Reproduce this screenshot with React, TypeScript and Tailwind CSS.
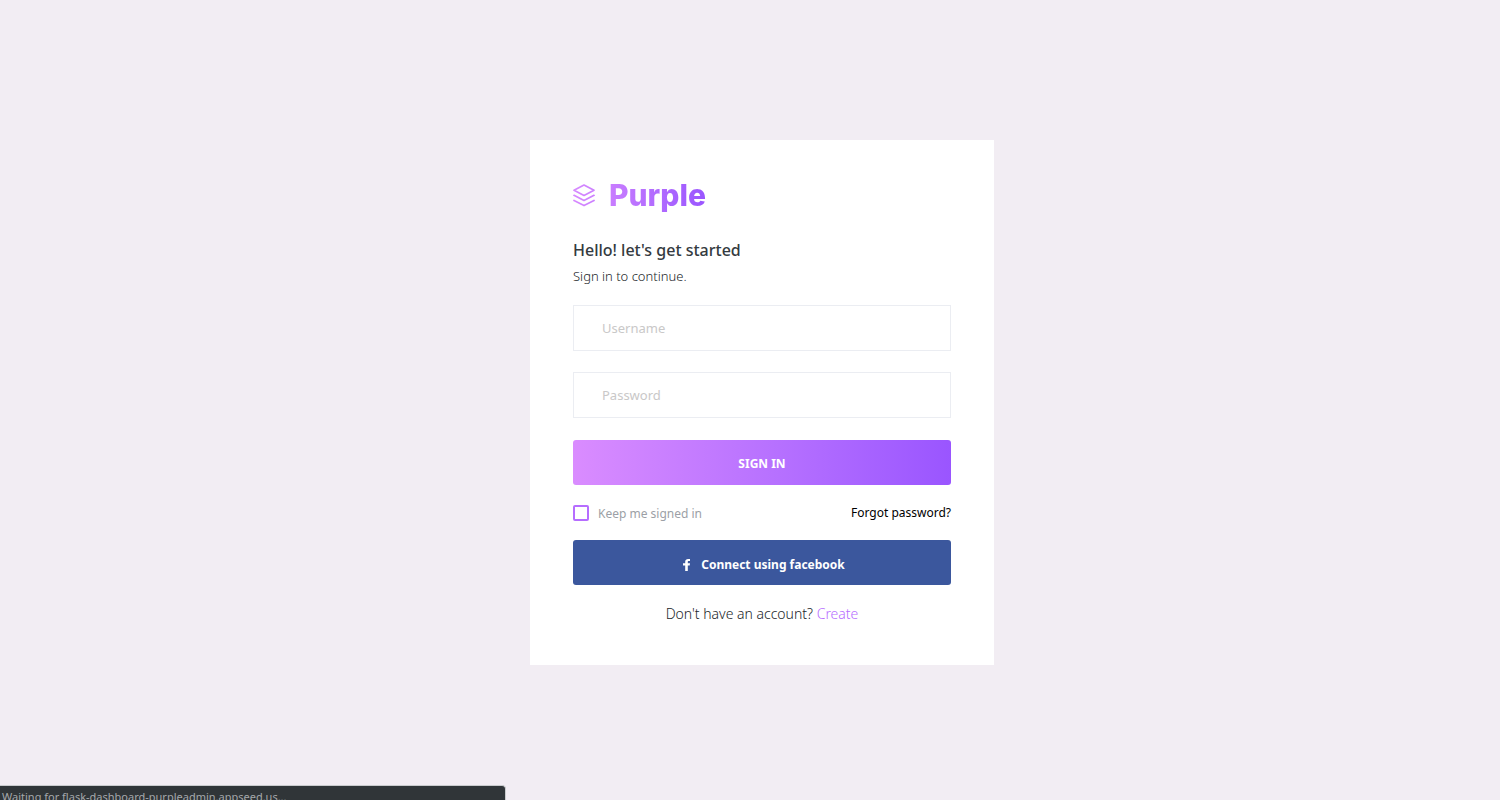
import React from "react";

function LayersIcon() {
  return (
    <svg className="h-6 w-[22px] shrink-0" viewBox="0 0 22 24" fill="none" aria-hidden="true">
      <defs>
        <linearGradient id="brand" gradientUnits="userSpaceOnUse" x1="-4" y1="0" x2="60" y2="0">
          <stop offset="0" stopColor="#da8cff" />
          <stop offset="1" stopColor="#b66dff" />
        </linearGradient>
      </defs>
      <g stroke="url(#brand)" strokeWidth="1.7" strokeLinejoin="round" strokeLinecap="round">
        <path d="M11 2 21 7.200 11 12.400 1 7.200Z" />
        <path d="M1 12.300 11 17.500 21 12.300" />
        <path d="M1 17.400 11 22.600 21 17.400" />
      </g>
    </svg>
  );
}

function FacebookIcon() {
  return (
    <svg className="h-3 w-[7px] shrink-0" viewBox="0 0 7 12" fill="currentColor" aria-hidden="true">
      <path d="M7 .1V2H5.800c-.8 0-1 .4-1 1v1.300H7l-.3 2.100H4.800V12H2.200V6.400H0V4.300h2.200V2.600C2.200.9 3.400 0 5.100 0 5.900 0 6.600.1 7 .1Z" />
    </svg>
  );
}

const field =
  "h-[46px] w-full rounded-none border border-[#ebedf2] bg-white px-7 text-[13px] text-[#343a40] placeholder:text-[#c9c8c8] placeholder:opacity-100 outline-none focus:border-[#b66dff]";

export default function App() {
  return (
    <div className="relative flex min-h-screen items-center justify-center overflow-hidden bg-[#f2edf3] pt-[5px] pl-6 font-['Noto_Sans',sans-serif] text-[#343a40]">
      <main className="w-full max-w-[464px] bg-white px-[43px] pt-[34px] pb-[41px]">
        <div className="flex h-[42px] items-center gap-[14px]">
          <LayersIcon />
          <span className="bg-linear-to-r from-[#c97dff] to-[#9a55ff] bg-clip-text font-['Inter',sans-serif] text-3xl leading-10 font-extrabold text-transparent">
            Purple
          </span>
        </div>
        <h1 className="mt-[22px] text-base leading-6 font-medium">Hello! let's get started</h1>
        <p className="mt-1 text-[13px] leading-5 font-light text-[#212529]">Sign in to continue.</p>
        <form className="mt-[19px]" onSubmit={(e) => e.preventDefault()}>
          <input className={field} type="text" placeholder="Username" aria-label="Username" />
          <input className={`${field} mt-[21px]`} type="password" placeholder="Password" aria-label="Password" />
          <button
            type="submit"
            className="mt-[22px] block h-[45px] w-full rounded-[3px] bg-linear-to-r from-[#da8cff] to-[#9a55ff] pt-0.5 text-xs font-bold text-white"
          >
            SIGN IN
          </button>
          <div className="mt-[18px] flex h-5 items-start justify-between text-xs leading-5">
            <label className="flex items-center gap-[9px] text-[#9c9fa6]">
              <input
                type="checkbox"
                className="size-4 appearance-none rounded-[2px] border-2 border-[#b66dff] bg-white checked:bg-[#b66dff]"
              />
              <span className="pt-0.5 leading-[18px]">Keep me signed in</span>
            </label>
            <a href="#forgot" className="text-black">
              Forgot password?
            </a>
          </div>
          <button
            type="button"
            className="mt-[17px] flex h-[45px] w-full items-center justify-center gap-[11px] rounded-[3px] bg-[#3b579d] pt-1 pl-1 text-xs font-bold text-white"
          >
            <FacebookIcon />
            Connect using facebook
          </button>
          <p className="mt-[19px] text-center text-sm leading-5 font-light text-[#212529]">
            Don't have an account?{" "}
            <a href="#create" className="text-[#b66dff]">
              Create
            </a>
          </p>
        </form>
      </main>
      <div className="absolute bottom-0 left-0 h-[15px] w-[506px] rounded-tr-[4px] border-t border-r border-[#c9cbcd] bg-[#303538] pl-[2px] text-[11px] leading-[22px] text-[#a5a8ab]">
        Waiting for flask-dashboard-purpleadmin.appseed.us...
      </div>
    </div>
  );
}
